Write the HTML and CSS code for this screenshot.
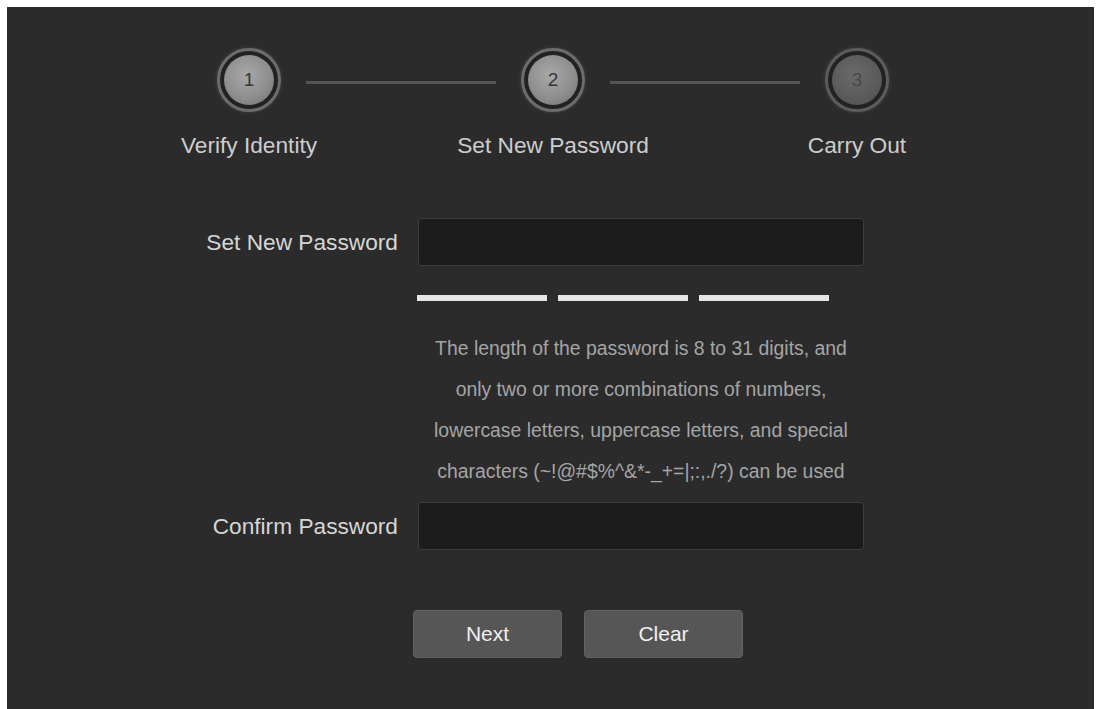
FILE: index.html
```html
<!DOCTYPE html>
<html lang="en">
<head>
  <meta charset="UTF-8" />
  <title>Reset Password</title>
  <link rel="stylesheet" href="styles.css">
</head>
<body>
  <div class="panel">
    <div class="steps-track">
      <div class="dot"><span class="num">1</span></div>
      <div class="step-line"></div>
      <div class="dot"><span class="num">2</span></div>
      <div class="step-line"></div>
      <div class="dot dot-off"><span class="num">3</span></div>
    </div>
    <div class="steps-labels">
      <span class="step-label">Verify Identity</span>
      <span class="step-label">Set New Password</span>
      <span class="step-label">Carry Out</span>
    </div>

    <form class="pwd-form" onsubmit="return false">
      <label class="field-label" for="newPwd">Set New Password</label>
      <input class="field" type="password" id="newPwd" />

      <div class="strength">
        <span class="bar"></span><span class="bar"></span><span class="bar"></span>
      </div>

      <p class="hint">The length of the password is 8 to 31 digits, and<br/>only two or more combinations of numbers,<br/>lowercase letters, uppercase letters, and special<br/>characters (~!@#$%^&amp;*-_+=|;:,./?) can be used</p>

      <label class="field-label" for="confirmPwd">Confirm Password</label>
      <input class="field" type="password" id="confirmPwd" />

      <div class="actions">
        <button type="button" class="btn btn-next">Next</button>
        <button type="button" class="btn btn-clear">Clear</button>
      </div>
    </form>
  </div>
</body>
</html>
```

FILE: styles.css
```css
html, body { margin: 0; background-color: #ffffff; }
body { padding: 7px 5px 0 7px; font-family: "Liberation Sans", Arial, sans-serif; }
.panel { background-color: #2b2b2b; min-height: 702px; padding-top: 41px; box-sizing: border-box; }

.steps-track { display: flex; align-items: center; margin-left: 210px; }
.dot { width: 64px; height: 64px; box-sizing: border-box; border-radius: 50%; border: 3px solid #6c6c6c; padding: 4px; background-color: #222222; box-shadow: 0 0 4px rgba(120,120,120,0.35); }
.num { display: flex; align-items: center; justify-content: center; width: 100%; height: 100%; border-radius: 50%; background: radial-gradient(circle at 45% 40%, #a9a9a9 0%, #8c8c8c 60%, #6c6c6c 100%); color: #363636; font-size: 19px; }
.dot-off { border-color: #5c5c5c; }
.dot-off .num { background: radial-gradient(circle at 45% 40%, #6a6a6a 0%, #5a5a5a 60%, #4c4c4c 100%); color: #484848; }
.step-line { width: 190px; height: 3px; margin: 5px 25px 0 25px; background-color: #555555; }

.steps-labels { display: flex; justify-content: space-between; width: 808px; margin: 21px 0 0 142px; }
.step-label { width: 200px; text-align: center; font-size: 22.7px; line-height: 24px; color: #cdcdcd; }

.pwd-form { display: grid; grid-template-columns: 391px 446px; column-gap: 20px; margin-top: 61px; }
.field-label { grid-column: 1; align-self: center; text-align: right; font-size: 22.7px; color: #d6d6d6; }
.field { grid-column: 2; height: 48px; box-sizing: border-box; margin: 0; background-color: #1c1c1c; border: 1px solid #3c3c3c; border-radius: 3px; color: #ddd; font-size: 16px; padding: 0 10px; outline: none; }

.strength { grid-column: 2; display: flex; gap: 11px; margin-top: 29px; margin-left: -1px; }
.bar { width: 130px; height: 6px; background-color: #e6e6e6; }

.hint { grid-column: 2; margin: 27px 0 10px 0; text-align: center; font-size: 19.4px; line-height: 41px; color: #a5a5a5; }

.actions { grid-column: 2; display: flex; gap: 22px; margin: 60px 0 0 -5px; }
.btn { height: 48px; border: 1px solid #626262; border-radius: 4px; background-color: #565656; color: #f0f0f0; font-family: "Liberation Sans", Arial, sans-serif; font-size: 21px; cursor: pointer; }
.btn-next { width: 149px; }
.btn-clear { width: 159px; }
```
